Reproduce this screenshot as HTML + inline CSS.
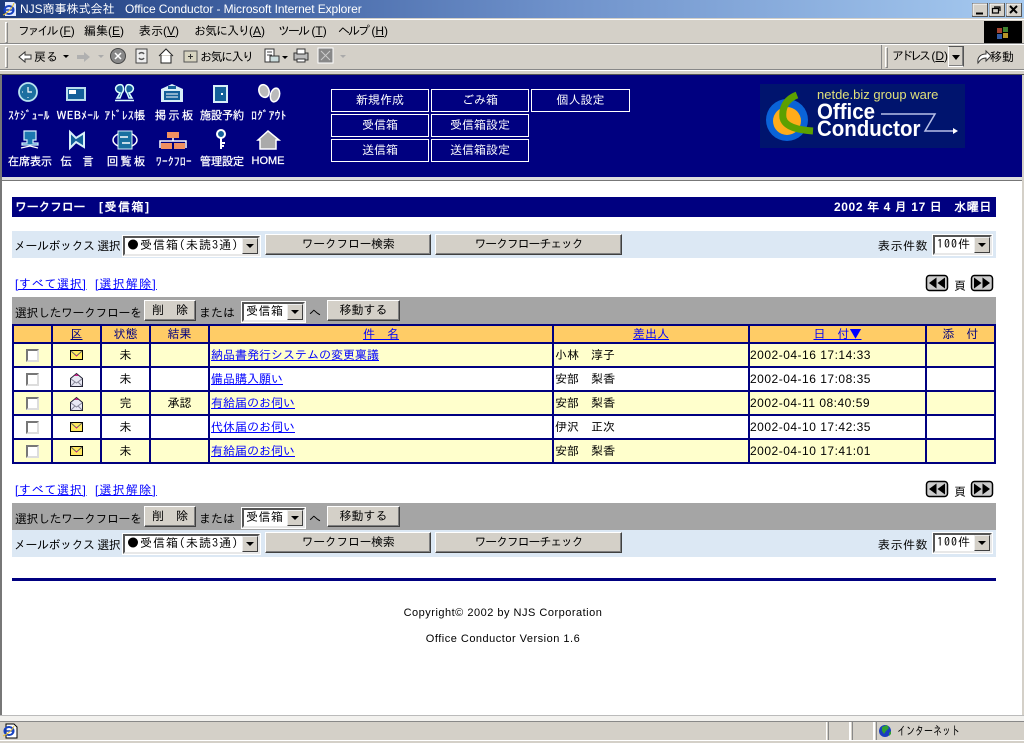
<!DOCTYPE html>
<html lang="ja"><head><meta charset="utf-8"><title>Office Conductor</title>
<style>
html,body{margin:0;padding:0;width:1024px;height:743px;overflow:hidden;background:#fff}
body{position:relative;font-family:"Liberation Sans","IPAGothic","Noto Sans CJK JP",sans-serif;font-size:12px;color:#000}
.r{position:absolute}
.t{position:absolute;white-space:nowrap;line-height:14px}
a{color:#00f;text-decoration:underline}
.lk{letter-spacing:.7px}
.nl{position:absolute;white-space:nowrap;color:#fff;font:400 11px/12px "Noto Sans CJK JP",sans-serif;transform:translateX(-50%);-webkit-text-stroke:.25px #fff}
.hw{letter-spacing:.5px}
.nb{position:absolute;box-sizing:border-box;border:1px solid #fff;color:#fff;text-align:center;font-size:12px;line-height:21px;height:23px}
.b{position:absolute;box-sizing:border-box;background:#d4d0c8;border:1px solid;border-color:#fff #404040 #404040 #fff;box-shadow:inset -1px -1px #808080;text-align:center;font-size:12px;line-height:18px;white-space:nowrap}
.s{position:absolute;box-sizing:border-box;background:#fff;border:2px solid;border-color:#555 #e8e8e8 #e8e8e8 #555;outline:1px solid #fff;height:20px;font-size:12px;line-height:15px;padding-left:2px;white-space:nowrap;overflow:hidden;letter-spacing:1px;font-family:"IPAGothic",sans-serif}
.s i{position:absolute;right:0;top:0;width:16px;height:16px;box-sizing:border-box;background:#d4d0c8;border:1px solid;border-color:#eee #404040 #404040 #eee}
.s i:after{content:"";position:absolute;left:3px;top:5px;border:4px solid transparent;border-top:4px solid #000;border-bottom:0}
.cb{display:inline-block;box-sizing:border-box;width:13px;height:13px;background:#fff;border:2px solid;border-color:#777 #ddd #ddd #777;vertical-align:middle}
table{position:absolute;left:12px;top:324px;border-collapse:separate;border-spacing:2px;background:#000080;table-layout:fixed;width:984px}
td{padding:0;font-size:12px;line-height:14px;white-space:nowrap;overflow:hidden}
tr.h td{background:#fc6;color:#000080;text-align:center;height:16px}
tr.y td{background:#ffc;height:22px}
tr.w td{background:#fff;height:22px}
td.c{text-align:center}
td.l{padding-left:1px}
td.d{padding-left:0;letter-spacing:.5px}
</style></head><body>

<!-- window chrome -->
<div class="r" style="left:0;top:0;width:1024px;height:18px;background:linear-gradient(90deg,#1c3a7c 0,#4a6cab 30%,#6f92cb 55%,#a6caf0 100%)"></div>
<div class="t" style="left:20px;top:2px;color:#fff">NJS商事株式会社</div>
<div class="t" style="left:125px;top:2px;color:#fff;letter-spacing:-.1px">Office Conductor - Microsoft Internet Explorer</div>
<div class="r" style="left:0;top:18px;width:1024px;height:57px;background:#d4d0c8"></div>
<div class="r" style="left:0;top:19px;width:1024px;height:1px;background:#fff"></div>
<div class="r" style="left:0;top:43px;width:1024px;height:1px;background:#888"></div>
<div class="r" style="left:0;top:44px;width:1024px;height:1px;background:#fff"></div>
<div class="r" style="left:0;top:69px;width:1024px;height:1px;background:#888"></div>
<div class="r" style="left:0;top:70px;width:1024px;height:1px;background:#fff"></div>
<div class="r" style="left:0;top:74px;width:1024px;height:1px;background:#555"></div>
<div class="r" style="left:5px;top:22px;width:1px;height:19px;border:1px solid;border-color:#fff #888 #888 #fff"></div>
<div class="r" style="left:5px;top:47px;width:1px;height:19px;border:1px solid;border-color:#fff #888 #888 #fff"></div>
<div class="r" style="left:885px;top:47px;width:1px;height:19px;border:1px solid;border-color:#fff #888 #888 #fff"></div>
<div class="r" style="left:881px;top:45px;width:1px;height:24px;background:#888"></div>

<div class="t" style="left:18px;top:24px"><span style="letter-spacing:-2.5px">ファイル</span>&nbsp;(<u>F</u>)</div>
<div class="t" style="left:84px;top:24px">編集(<u>E</u>)</div>
<div class="t" style="left:139px;top:24px">表示(<u>V</u>)</div>
<div class="t" style="left:194px;top:24px"><span style="letter-spacing:-1px">お気に入り</span>(<u>A</u>)</div>
<div class="t" style="left:278px;top:24px"><span style="letter-spacing:-2px">ツール</span>&nbsp;(<u>T</u>)</div>
<div class="t" style="left:338px;top:24px"><span style="letter-spacing:-2px">ヘルプ</span>&nbsp;(<u>H</u>)</div>
<div class="t" style="left:34px;top:50px">戻る</div>
<div class="t" style="left:200px;top:50px;letter-spacing:-1.5px;font-size:12px">お気に入り</div>
<div class="t" style="left:892px;top:49px"><span style="letter-spacing:-3px">アドレス</span>&nbsp;(<u>D</u>)</div>
<div class="t" style="left:990px;top:50px">移動</div>

<div class="r" style="left:984px;top:21px;width:38px;height:22px;background:#000"></div>
<div class="b" style="left:948px;top:46px;width:16px;height:21px;border-color:#555 #555 #fff #fff"></div>

<!-- nav -->
<div class="r" style="left:2px;top:75px;width:1020px;height:102px;background:#000080"></div>
<div class="r" style="left:0;top:75px;width:2px;height:640px;background:#777"></div>
<div class="r" style="left:1022px;top:75px;width:2px;height:647px;background:#d4d0c8"></div>
<div class="r" style="left:2px;top:177px;width:1020px;height:3px;background:#ddd"></div>
<div class="r" style="left:2px;top:180px;width:1020px;height:1px;background:#777"></div>

<div class="nl hw" style="left:29px;top:109px">ｽｹｼﾞｭｰﾙ</div>
<div class="nl hw" style="left:78px;top:109px">WEBﾒｰﾙ</div>
<div class="nl hw" style="left:125px;top:109px">ｱﾄﾞﾚｽ帳</div>
<div class="nl" style="left:174px;top:109px">掲 示 板</div>
<div class="nl" style="left:222px;top:109px">施設予約</div>
<div class="nl hw" style="left:269px;top:109px">ﾛｸﾞｱｳﾄ</div>
<div class="nl" style="left:30px;top:155px">在席表示</div>
<div class="nl" style="left:77px;top:155px">伝　言</div>
<div class="nl" style="left:126px;top:155px">回 覧 板</div>
<div class="nl hw" style="left:174px;top:155px">ﾜｰｸﾌﾛｰ</div>
<div class="nl" style="left:222px;top:155px">管理設定</div>
<div class="nl" style="left:268px;top:155px;font-family:'Liberation Sans',sans-serif">HOME</div>

<div class="nb" style="left:331px;top:89px;width:98px">新規作成</div>
<div class="nb" style="left:431px;top:89px;width:98px">ごみ箱</div>
<div class="nb" style="left:531px;top:89px;width:99px">個人設定</div>
<div class="nb" style="left:331px;top:114px;width:98px">受信箱</div>
<div class="nb" style="left:431px;top:114px;width:98px">受信箱設定</div>
<div class="nb" style="left:331px;top:139px;width:98px">送信箱</div>
<div class="nb" style="left:431px;top:139px;width:98px">送信箱設定</div>

<!-- logo -->
<div class="r" style="left:760px;top:84px;width:205px;height:64px;background:#00146e"></div>
<div class="t" style="left:817px;top:88px;color:#dfe07a;font:13px/14px 'Liberation Sans',sans-serif">netde.biz group ware</div>
<div class="t" style="left:817px;top:101px;color:#fff;font:bold 22px/22px 'Liberation Sans',sans-serif;transform:scaleX(.93);transform-origin:0 0">Office</div>
<div class="t" style="left:817px;top:118px;color:#fff;font:bold 22px/22px 'Liberation Sans',sans-serif;transform:scaleX(.93);transform-origin:0 0">Conductor</div>

<!-- heading -->
<div class="r" style="left:12px;top:197px;width:984px;height:20px;background:#000080"></div>
<div class="t" style="left:15px;top:200px;color:#fff;font-weight:bold;letter-spacing:-.3px">ワークフロー</div>
<div class="t" style="left:99px;top:200px;color:#fff;font-weight:bold;letter-spacing:1.5px">[受信箱]</div>
<div class="t" style="right:32px;top:200px;color:#fff;font-weight:bold;letter-spacing:.6px">2002 年 4 月 17 日&nbsp;&nbsp; 水曜日</div>

<!-- top mailbox bar -->
<div class="r" style="left:12px;top:231px;width:984px;height:27px;background:#dce8f4"></div>
<div class="t" style="left:14px;top:239px;letter-spacing:-.5px">メールボックス 選択</div>
<div class="s" style="left:123px;top:236px;width:137px">●受信箱(未読3通)<i></i></div>
<div class="b" style="left:265px;top:234px;width:166px;height:21px;letter-spacing:-.4px">ワークフロー検索</div>
<div class="b" style="left:435px;top:234px;width:187px;height:21px;letter-spacing:-1.2px">ワークフローチェック</div>
<div class="t" style="left:878px;top:239px;letter-spacing:.5px">表示件数</div>
<div class="s" style="left:933px;top:235px;width:59px">100件<i></i></div>

<div class="t lk" style="left:15px;top:277px"><a>[すべて選択]</a></div>
<div class="t lk" style="left:95px;top:277px;letter-spacing:1.2px"><a>[選択解除]</a></div>
<div class="t" style="left:954px;top:279px">頁</div>

<!-- top action bar -->
<div class="r" style="left:12px;top:297px;width:984px;height:27px;background:#a5a5a5"></div>
<div class="t" style="left:15px;top:306px;letter-spacing:-.5px">選択したワークフローを</div>
<div class="b" style="left:144px;top:300px;width:52px;height:21px">削　除</div>
<div class="t" style="left:199px;top:306px">または</div>
<div class="s" style="left:242px;top:302px;width:63px;letter-spacing:.5px">受信箱<i></i></div>
<div class="t" style="left:309px;top:306px">へ</div>
<div class="b" style="left:327px;top:300px;width:73px;height:21px">移動する</div>

<!-- table -->
<table><colgroup><col style="width:37px"><col style="width:47px"><col style="width:47px"><col style="width:57px"><col style="width:342px"><col style="width:194px"><col style="width:175px"><col style="width:67px"></colgroup>
<tr class="h"><td></td><td><a style="color:#000080">区</a></td><td>状態</td><td>結果</td><td><a>件　名</a></td><td><a>差出人</a></td><td><a>日　付<span style="font-family:'Noto Sans CJK JP',sans-serif">▼</span></a></td><td>添　付</td></tr>
<tr class="y"><td class="c"><span class="cb"></span></td><td></td><td class="c">未</td><td class="c"></td><td class="l"><a>納品書発行システムの変更稟議</a></td><td class="l">小林　淳子</td><td class="d">2002-04-16 17:14:33</td><td></td></tr>
<tr class="w"><td class="c"><span class="cb"></span></td><td></td><td class="c">未</td><td class="c"></td><td class="l"><a>備品購入願い</a></td><td class="l">安部　梨香</td><td class="d">2002-04-16 17:08:35</td><td></td></tr>
<tr class="y"><td class="c"><span class="cb"></span></td><td></td><td class="c">完</td><td class="c">承認</td><td class="l"><a>有給届のお伺い</a></td><td class="l">安部　梨香</td><td class="d">2002-04-11 08:40:59</td><td></td></tr>
<tr class="w"><td class="c"><span class="cb"></span></td><td></td><td class="c">未</td><td class="c"></td><td class="l"><a>代休届のお伺い</a></td><td class="l">伊沢　正次</td><td class="d">2002-04-10 17:42:35</td><td></td></tr>
<tr class="y"><td class="c"><span class="cb"></span></td><td></td><td class="c">未</td><td class="c"></td><td class="l"><a>有給届のお伺い</a></td><td class="l">安部　梨香</td><td class="d">2002-04-10 17:41:01</td><td></td></tr>
</table>

<div class="t lk" style="left:15px;top:483px"><a>[すべて選択]</a></div>
<div class="t lk" style="left:95px;top:483px;letter-spacing:1.2px"><a>[選択解除]</a></div>
<div class="t" style="left:954px;top:485px">頁</div>

<!-- bottom bars -->
<div class="r" style="left:12px;top:503px;width:984px;height:27px;background:#a5a5a5"></div>
<div class="t" style="left:15px;top:512px;letter-spacing:-.5px">選択したワークフローを</div>
<div class="b" style="left:144px;top:506px;width:52px;height:21px">削　除</div>
<div class="t" style="left:199px;top:512px">または</div>
<div class="s" style="left:242px;top:508px;width:63px;letter-spacing:.5px">受信箱<i></i></div>
<div class="t" style="left:309px;top:512px">へ</div>
<div class="b" style="left:327px;top:506px;width:73px;height:21px">移動する</div>

<div class="r" style="left:12px;top:530px;width:984px;height:27px;background:#dce8f4"></div>
<div class="t" style="left:14px;top:538px;letter-spacing:-.5px">メールボックス 選択</div>
<div class="s" style="left:123px;top:534px;width:137px">●受信箱(未読3通)<i></i></div>
<div class="b" style="left:265px;top:532px;width:166px;height:21px;letter-spacing:-.4px">ワークフロー検索</div>
<div class="b" style="left:435px;top:532px;width:187px;height:21px;letter-spacing:-1.2px">ワークフローチェック</div>
<div class="t" style="left:878px;top:538px;letter-spacing:.5px">表示件数</div>
<div class="s" style="left:933px;top:533px;width:59px">100件<i></i></div>

<div class="r" style="left:12px;top:578px;width:984px;height:3px;background:#000080"></div>
<div class="t" style="left:0;width:1006px;text-align:center;top:606px;font:11px/14px 'Liberation Sans',sans-serif;letter-spacing:.5px">Copyright© 2002 by NJS Corporation</div>
<div class="t" style="left:0;width:1006px;text-align:center;top:632px;font:11px/14px 'Liberation Sans',sans-serif;letter-spacing:.5px">Office Conductor Version 1.6</div>

<!-- status bar -->
<div class="r" style="left:0;top:715px;width:1024px;height:28px;background:#d4d0c8"></div>
<div class="r" style="left:0;top:715px;width:1024px;height:1px;background:#bbb"></div>
<div class="r" style="left:0;top:716px;width:1024px;height:5px;background:#f2f1ee"></div>
<div class="r" style="left:0;top:721px;width:1024px;height:1px;background:#888"></div>
<div class="r" style="left:0;top:740px;width:1024px;height:1px;background:#fff"></div>
<div class="r" style="left:826px;top:722px;width:1px;height:18px;background:#fff"></div>
<div class="r" style="left:828px;top:722px;width:1px;height:18px;background:#888"></div>
<div class="r" style="left:849px;top:722px;width:2px;height:18px;background:#fff"></div>
<div class="r" style="left:852px;top:722px;width:1px;height:18px;background:#888"></div>
<div class="r" style="left:873px;top:722px;width:2px;height:18px;background:#fff"></div>
<div class="r" style="left:876px;top:722px;width:1px;height:18px;background:#888"></div>
<div class="t" style="left:897px;top:724px;transform:scaleX(.75);transform-origin:0 0">インターネット</div>

<!-- icons overlay -->
<svg class="r" style="left:0;top:0" width="1024" height="743" viewBox="0 0 1024 743" xmlns="http://www.w3.org/2000/svg">
<defs>
<g id="m"><rect x=".5" y=".5" width="12" height="9" fill="#ffe860" stroke="#000"/><path d="M1 1l5.500 5 5.500-5" fill="none" stroke="#666"/><path d="M5 5h3l-1.500 1.500z" fill="#d0208a"/></g>
<g id="o"><path d="M.5 5.500L6.500.5l6 5v8H.5z" fill="#e8e8f4" stroke="#223"/><path d="M1 6l5.500 4L12 6M1 13l4-4M12 13L8 9" fill="none" stroke="#889"/><path d="M4 3h5L6.500 1z" fill="#d0208a"/></g>
<g id="ar"><rect x=".5" y=".5" width="21" height="15" rx="3" fill="#ccc" stroke="#000" stroke-width="1.500"/><path d="M3 8L10.500 2.500v11zM11.500 8L19 2.500v11z" fill="#000"/></g>
<g id="af"><rect x=".5" y=".5" width="21" height="15" rx="3" fill="#ccc" stroke="#000" stroke-width="1.500"/><path d="M10.500 8L3 2.500v11zM19 8L11.500 2.500v11z" fill="#000"/></g>
</defs>

<!-- title icon -->
<path d="M5 2h9l2 2v12H5z" fill="#dfe8ff"/><ellipse cx="9" cy="10" rx="4.500" ry="4" fill="none" stroke="#1540c0" stroke-width="2"/><path d="M5 10h8" stroke="#1540c0" stroke-width="1.500"/><path d="M3 15c3-1 9-6 11-12" fill="none" stroke="#e8c030"/>
<!-- window buttons -->
<g fill="#d4d0c8" stroke="#555"><rect x="972.500" y="3.500" width="15" height="13"/><rect x="989.500" y="3.500" width="15" height="13"/><rect x="1006.500" y="3.500" width="15" height="13"/></g>
<path d="M973 15.500V4h14M990 15.500V4h14M1007 15.500V4h14" fill="none" stroke="#fff"/>
<path d="M976 13.500h7" stroke="#000" stroke-width="2"/>
<path d="M994 7h6v4M992.500 8.500h6v4.500h-6z" fill="none" stroke="#000" stroke-width="1.200"/>
<path d="M1010 6l7 7M1017 6l-7 7" stroke="#000" stroke-width="2"/>
<!-- windows logo -->
<g opacity=".85"><rect x="997" y="28" width="5" height="5" fill="#c0503a"/><rect x="1003" y="27" width="5" height="5" fill="#4a9a3a"/><rect x="997" y="34" width="5" height="5" fill="#3a6ac0"/><rect x="1003" y="33" width="5" height="5" fill="#d8b030"/></g>
<!-- toolbar icons -->
<path d="M19 57l6-5v3h6v4h-6v3z" fill="#fff" stroke="#333"/>
<path d="M63 55h6l-3 3z" fill="#000"/>
<path d="M90 57l-6-5v3h-7v4h7v3z" fill="#b0b0b0"/>
<path d="M98 55h6l-3 3z" fill="#aaa"/>
<circle cx="118" cy="56" r="7.500" fill="#888" stroke="#444"/><path d="M115 53l6 6M121 53l-6 6" stroke="#fff" stroke-width="1.500"/>
<rect x="136" y="49" width="11" height="14" fill="#eee" stroke="#444"/><path d="M139 54a3 3 0 0 1 5 0M144 58a3 3 0 0 1-5 0" fill="none" stroke="#555" stroke-width="1.500"/>
<path d="M159 56l7-7 7 7M161 55v8h10v-8" fill="#fff" stroke="#222"/>
<rect x="184" y="51" width="13" height="11" fill="#d8d4c0" stroke="#555"/><path d="M188 56.500h5M190.500 54v5" stroke="#333"/>
<path d="M265 49h9v13h-9z" fill="#fff" stroke="#333"/><path d="M267 52h5M267 55h5" stroke="#444"/><path d="M270 56h9v6h-9z" fill="#cdd" stroke="#333"/><path d="M282 56h6l-3 3z" fill="#000"/>
<path d="M294 53h14v7h-14z" fill="#bbb" stroke="#333"/><rect x="297" y="49" width="8" height="5" fill="#fff" stroke="#333"/><rect x="297" y="59" width="8" height="3" fill="#fff" stroke="#333"/>
<rect x="318" y="48" width="15" height="15" fill="#888" stroke="#fff"/><path d="M321 51l9 9M330 51l-9 9" stroke="#ccc"/>
<path d="M340 55h6l-3 3z" fill="#aaa"/>
<path d="M978 63c-1-6 3-9 8-9v-3l5 5-5 5v-3c-4 0-6 2-8 5z" fill="#fff" stroke="#333"/>
<path d="M952 55h8l-4 5z" fill="#000"/>

<!-- nav icons -->
<circle cx="28" cy="92" r="9" fill="#1c6fa0" stroke="#b8e4f0" stroke-width="1.800"/><path d="M28 87v5h4" fill="none" stroke="#fff" stroke-width="1.200"/><path d="M22 92h1M28 97v1" stroke="#fff"/>
<rect x="66" y="87" width="20" height="14" fill="#b8dcec"/><rect x="68" y="89" width="16" height="10" fill="#14609a"/><rect x="69" y="90" width="7" height="4" fill="#fff"/>
<path d="M117 98l3-5c-4-1-5-4-4-6 1-2 4-3 6-2 2 2 2 6 0 8l-2 5zM132 98l-3-5c4-1 5-4 4-6-1-2-4-3-6-2-2 2-2 6 0 8l2 5z" fill="#14609a" stroke="#dff" stroke-width="1.500"/><path d="M115 100.500h19" stroke="#dff" stroke-width="1.500"/>
<path d="M172 84l-11 5v13h22V89z" fill="#d8eef8"/><rect x="164" y="91" width="16" height="9" fill="#14609a"/><path d="M166 94h12M166 97h12" stroke="#fff"/><rect x="168" y="86" width="8" height="3" fill="#14609a"/>
<rect x="213" y="85" width="15" height="18" fill="#d8eef8"/><rect x="215" y="87" width="11" height="14" fill="#14609a"/><rect x="221" y="93" width="2" height="2" fill="#fff"/>
<ellipse cx="264" cy="91" rx="5" ry="6.500" fill="#bbb" stroke="#fff" stroke-width="1.500" transform="rotate(-20 264 91)"/><ellipse cx="275" cy="95" rx="4.500" ry="7" fill="#bbb" stroke="#fff" stroke-width="1.500" transform="rotate(15 275 95)"/>

<path d="M24 131h12v9h-3v3h5v2H22v-2h5v-3h-3z" fill="#1c78b0" stroke="#d8f0ff" stroke-width="1.200"/><path d="M21 148l9-2 8 2" fill="none" stroke="#fff" stroke-width="1.200"/>
<path d="M70 132l6 6 8-5v14l-8-5-6 6z" fill="#14609a" stroke="#d8eef8" stroke-width="2"/>
<rect x="118" y="131" width="14" height="18" fill="#1a70a0" stroke="#d8eef8"/><path d="M118 134c-4 2-5 4-5 6s1 4 5 6M132 134c4 2 5 4 5 6s-1 4-5 6M120 137h8M122 143h8" fill="none" stroke="#fff" stroke-width="1.500"/>
<path d="M167 132h12v6h-12zM161 143h11v6h-11zM174 143h11v6h-11z" fill="#f09060"/><path d="M173 138v3M160 148v-7h26v7" fill="none" stroke="#fff" stroke-width="1.500"/>
<circle cx="221" cy="134" r="4" fill="#14609a" stroke="#fff" stroke-width="2"/><path d="M221 138v11M221 143h4M221 146h3" stroke="#fff" stroke-width="2"/>
<path d="M258 140l10-9 11 9h-3v9h-16v-9z" fill="#aaa" stroke="#fff" stroke-width="1.500"/>

<!-- logo -->
<circle cx="787" cy="120" r="21" fill="#0a63d8"/><circle cx="787" cy="121" r="14" fill="#ffac1a"/>
<path d="M797 95C784 100 782 110 783 118 785 127 798 130 813 131" fill="none" stroke="#5ca000" stroke-width="7"/>
<path d="M881 114h54l-10 17h30" fill="none" stroke="#b8c0e8" stroke-width="1.500"/><path d="M958 131l-5-3v6z" fill="#fff"/>

<!-- table icons -->
<use href="#m" x="70" y="350"/>
<use href="#o" x="70" y="373"/>
<use href="#o" x="70" y="397"/>
<use href="#m" x="70" y="422"/>
<use href="#m" x="70" y="446"/>

<!-- pager -->
<use href="#ar" x="926" y="275"/><use href="#af" x="971" y="275"/>
<use href="#ar" x="926" y="481"/><use href="#af" x="971" y="481"/>

<!-- status icons -->
<path d="M6 724h8l3 3v11H6z" fill="#fff" stroke="#000"/><ellipse cx="9" cy="731" rx="4.500" ry="4" fill="none" stroke="#1540c0" stroke-width="2"/><path d="M5 731h8" stroke="#1540c0" stroke-width="1.500"/><path d="M3 736c3-1 9-5 11-10" fill="none" stroke="#e8c030"/>
<circle cx="885" cy="731" r="6" fill="#1a3ec0"/><path d="M882 727l5-2 2 3-3 3-2 3-2-3zM889 733l2-2 0 3-2 2z" fill="#2fa030"/>
</svg>
</body></html>
